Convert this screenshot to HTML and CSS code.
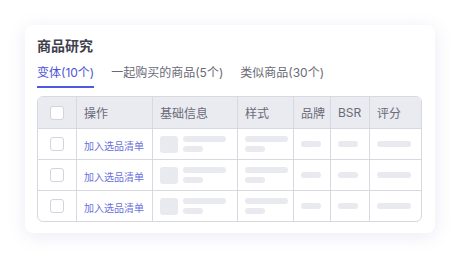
FILE: index.html
```html
<!DOCTYPE html>
<html>
<head>
    <meta charset="UTF-8">
    <title>商品研究</title>
    <link rel="stylesheet" href="styles.css">
</head>
<body>
<div class="card">
    <div class="title">商品研究</div>
    <ul class="tabs">
        <li class="active">变体(10个)</li>
        <li>一起购买的商品(5个)</li>
        <li>类似商品(30个)</li>
    </ul>
    <table class="grid">
        <thead>
        <tr>
            <th class="c-check"><span class="box"></span></th>
            <th class="c-op">操作</th>
            <th class="c-info">基础信息</th>
            <th class="c-style">样式</th>
            <th class="c-brand">品牌</th>
            <th class="c-bsr">BSR</th>
            <th class="c-score">评分</th>
        </tr>
        </thead>
        <tbody>
        <tr>
            <td class="c-check"><span class="box"></span></td>
            <td class="c-op"><a href="javascript:">加入选品清单</a></td>
            <td class="c-info"><div class="info"><span class="thumb"></span><div class="lines"><span class="bar long"></span><span class="bar short"></span></div></div></td>
            <td class="c-style"><div class="lines"><span class="bar long"></span><span class="bar short"></span></div></td>
            <td class="c-brand"><span class="bar short"></span></td>
            <td class="c-bsr"><span class="bar short"></span></td>
            <td class="c-score"><span class="bar mid"></span></td>
        </tr>
        <tr>
            <td class="c-check"><span class="box"></span></td>
            <td class="c-op"><a href="javascript:">加入选品清单</a></td>
            <td class="c-info"><div class="info"><span class="thumb"></span><div class="lines"><span class="bar long"></span><span class="bar short"></span></div></div></td>
            <td class="c-style"><div class="lines"><span class="bar long"></span><span class="bar short"></span></div></td>
            <td class="c-brand"><span class="bar short"></span></td>
            <td class="c-bsr"><span class="bar short"></span></td>
            <td class="c-score"><span class="bar mid"></span></td>
        </tr>
        <tr>
            <td class="c-check"><span class="box"></span></td>
            <td class="c-op"><a href="javascript:">加入选品清单</a></td>
            <td class="c-info"><div class="info"><span class="thumb"></span><div class="lines"><span class="bar long"></span><span class="bar short"></span></div></div></td>
            <td class="c-style"><div class="lines"><span class="bar long"></span><span class="bar short"></span></div></td>
            <td class="c-brand"><span class="bar short"></span></td>
            <td class="c-bsr"><span class="bar short"></span></td>
            <td class="c-score"><span class="bar mid"></span></td>
        </tr>
        </tbody>
    </table>
</div>
</body>
</html>
```
FILE: styles.css
```css
/* 页面整体 */
html, body {
    margin: 0;
    padding: 0;
    background: #fff;
}
body {
    padding: 25px;
    font-family: Inter, "Noto Sans CJK SC", sans-serif;
}
/* 卡片 */
.card {
    width: 410px;
    height: 208px;
    box-sizing: border-box;
    padding: 10px 13px 0 12px;
    background: #fff;
    border-radius: 8px;
    box-shadow: 0 3px 18px rgba(90, 100, 180, 0.13);
}
.title {
    font-size: 14px;
    line-height: 22px;
    font-weight: 600;
    color: #40404c;
}
/* 标签页 */
.tabs {
    display: flex;
    gap: 17px;
    margin: 8px 0 0;
    padding: 0;
    list-style: none;
}
.tabs li {
    font-size: 12px;
    line-height: 16px;
    color: #6a6a76;
    padding-bottom: 5px;
    border-bottom: 2px solid transparent;
}
.tabs li.active {
    color: #4b54d8;
    border-bottom-color: #5258e6;
}
/* 表格 */
.grid {
    margin-top: 8px;
    width: 385px;
    border-collapse: separate;
    border-spacing: 0;
    border: 1px solid #d8d8e0;
    border-radius: 6px;
    overflow: hidden;
    table-layout: fixed;
}
.grid th, .grid td {
    box-sizing: border-box;
    padding: 0 0 0 7px;
    border-left: 1px solid #d8d8e0;
    border-top: 1px solid #d8d8e0;
    text-align: left;
    vertical-align: middle;
}
.grid th:first-child, .grid td:first-child {
    border-left: none;
}
.grid thead th {
    border-top: none;
    height: 31px;
    background: #e9ebf0;
    font-size: 12px;
    font-weight: normal;
    color: #6a6a78;
}
.grid td {
    height: 31px;
}
.c-check { width: 38px; }
.c-op { width: 76px; }
.c-info { width: 85px; }
.c-style { width: 56px; }
.c-brand { width: 37px; }
.c-bsr { width: 39px; }
.grid .c-check {
    padding-left: 12px;
}
.box {
    display: block;
    width: 12px;
    height: 12px;
    border: 1px solid #d3d3db;
    border-radius: 3px;
    background: #fff;
}
.grid a {
    font-size: 10px;
    color: #6a6fdc;
    text-decoration: none;
}
/* 骨架占位 */
.info {
    display: flex;
    align-items: center;
    gap: 5px;
}
.thumb {
    width: 18px;
    height: 17px;
    border-radius: 3px;
    background: #e8eaef;
}
.lines {
    display: flex;
    flex-direction: column;
    gap: 4px;
}
.bar {
    display: block;
    height: 6px;
    border-radius: 3px;
    background: #e8eaef;
}
.bar.long { width: 43px; }
.bar.short { width: 20px; }
.bar.mid { width: 34px; }
```
